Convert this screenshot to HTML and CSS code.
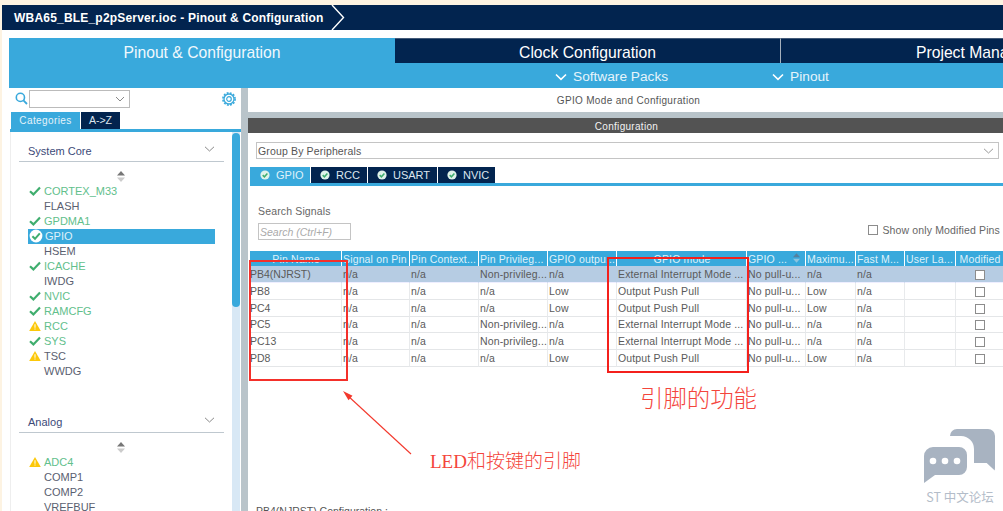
FILE: index.html
```html
<!DOCTYPE html>
<html lang="en">
<head>
<meta charset="utf-8">
<title>Pinout &amp; Configuration</title>
<link rel="stylesheet" href="styles.css">
</head>
<body>
<svg class="defs" width="0" height="0">
  <symbol id="chk" viewBox="0 0 12 10"><path d="M1 5.2 4.4 8.4 11 1.6" fill="none" stroke="#3fae6e" stroke-width="2.2"/></symbol>
  <symbol id="warn" viewBox="0 0 12 10"><path d="M6 0 11.8 10H.2Z" fill="#fcc80a"/><path d="M5.5 3.2h1v3.6h-1zM5.5 7.6h1v1h-1z" fill="#fff"/></symbol>
  <symbol id="tabchk" viewBox="0 0 10 10"><circle cx="5" cy="5" r="4.6" fill="#dff2ea"/><path d="M2.7 5.1 4.4 6.8 7.4 3.4" fill="none" stroke="#3fae6e" stroke-width="1.5"/></symbol>
  <symbol id="sort" viewBox="0 0 8 11"><path d="M4 0 8 4.6H0Z" fill="#777"/><path d="M4 11 8 6.4H0Z" fill="#ccc"/></symbol>
  <symbol id="thsort" viewBox="0 0 8 11"><path d="M4 0 8 4.6H0Z" fill="#55809e"/><path d="M4 11 8 6.4H0Z" fill="#8cc4df"/></symbol>
</svg>

<header class="titlebar">
  <span class="title">WBA65_BLE_p2pServer.ioc - Pinout &amp; Configuration</span>
  <svg class="crumb" width="16" height="25" viewBox="0 0 16 25"><path d="M1 0 12.5 12.5 1 25" fill="none" stroke="#fff" stroke-width="1.4"/></svg>
</header>

<div class="app">
  <nav class="tabs">
    <div class="tab tab-active">Pinout &amp; Configuration</div>
    <div class="tab tab-clock">Clock Configuration</div>
    <div class="tab tab-project">Project Manager</div>
  </nav>
  <div class="subbar">
    <div class="submenu sub-packs"><svg width="12" height="8" viewBox="0 0 12 8"><path d="M1 1.5 6 6.3 11 1.5" fill="none" stroke="#fff" stroke-width="1.6"/></svg>Software Packs</div>
    <div class="submenu sub-pinout"><svg width="12" height="8" viewBox="0 0 12 8"><path d="M1 1.5 6 6.3 11 1.5" fill="none" stroke="#fff" stroke-width="1.6"/></svg>Pinout</div>
  </div>

  <div class="workspace">
    <aside class="sidebar">
      <div class="searchrow">
        <svg class="lens" width="13" height="13" viewBox="0 0 13 13"><circle cx="5.4" cy="5.4" r="4.1" fill="none" stroke="#39a9dc" stroke-width="1.6"/><path d="M8.4 8.4 12 12" stroke="#39a9dc" stroke-width="1.8"/></svg>
        <div class="combo"><svg width="10" height="6" viewBox="0 0 10 6"><path d="M1 1 5 5 9 1" fill="none" stroke="#888" stroke-width="1"/></svg></div>
        <svg class="gear" width="14" height="14" viewBox="0 0 14 14"><circle cx="7" cy="7" r="5" fill="none" stroke="#39a9dc" stroke-width="1.3"/><circle cx="7" cy="7" r="6.1" fill="none" stroke="#39a9dc" stroke-width="1.6" stroke-dasharray="1.9 1.3"/><circle cx="7" cy="7" r="2.3" fill="none" stroke="#39a9dc" stroke-width="1.2"/></svg>
      </div>
      <div class="sidetabs">
        <div class="stab stab-active">Categories</div>
        <div class="stab">A-&gt;Z</div>
      </div>
      <div class="sidepanel">
        <div class="sidelist">
          <div class="group">System Core<svg width="11" height="6" viewBox="0 0 11 6"><path d="M1 .8 5.5 5 10 .8" fill="none" stroke="#888" stroke-width="1"/></svg></div>
          <svg class="sorter" width="8" height="11"><use href="#sort"/></svg>
          <ul class="items">
            <li class="ok"><svg><use href="#chk"/></svg>CORTEX_M33</li>
            <li>FLASH</li>
            <li class="ok"><svg><use href="#chk"/></svg>GPDMA1</li>
            <li class="sel"><svg class="selchk" width="14" height="14" viewBox="0 0 14 14"><circle cx="7" cy="7" r="6.4" fill="#fff"/><path d="M3.4 7.2 6 9.8 10.8 4.4" fill="none" stroke="#3fae6e" stroke-width="2"/></svg>GPIO</li>
            <li>HSEM</li>
            <li class="ok"><svg><use href="#chk"/></svg>ICACHE</li>
            <li>IWDG</li>
            <li class="ok"><svg><use href="#chk"/></svg>NVIC</li>
            <li class="ok"><svg><use href="#chk"/></svg>RAMCFG</li>
            <li class="ok"><svg><use href="#warn"/></svg>RCC</li>
            <li class="ok"><svg><use href="#chk"/></svg>SYS</li>
            <li><svg><use href="#warn"/></svg>TSC</li>
            <li>WWDG</li>
          </ul>
          <div class="group group-analog">Analog<svg width="11" height="6" viewBox="0 0 11 6"><path d="M1 .8 5.5 5 10 .8" fill="none" stroke="#888" stroke-width="1"/></svg></div>
          <svg class="sorter" width="8" height="11"><use href="#sort"/></svg>
          <ul class="items">
            <li class="ok"><svg><use href="#warn"/></svg>ADC4</li>
            <li>COMP1</li>
            <li>COMP2</li>
            <li>VREFBUF</li>
          </ul>
        </div>
        <div class="scrolltrack"><div class="scrollthumb"></div></div>
      </div>
    </aside>

    <main class="main">
      <div class="mainhead">GPIO Mode and Configuration</div>
      <div class="confbar">Configuration</div>
      <div class="groupby">Group By Peripherals<svg width="11" height="6" viewBox="0 0 11 6"><path d="M1 .8 5.5 5 10 .8" fill="none" stroke="#999" stroke-width="1"/></svg></div>
      <div class="ptabs">
        <div class="ptab ptab-active"><svg width="10" height="10"><use href="#tabchk"/></svg>GPIO</div>
        <div class="ptab"><svg width="10" height="10"><use href="#tabchk"/></svg>RCC</div>
        <div class="ptab"><svg width="10" height="10"><use href="#tabchk"/></svg>USART</div>
        <div class="ptab"><svg width="10" height="10"><use href="#tabchk"/></svg>NVIC</div>
      </div>
      <div class="signals">
        <div class="signals-left">
          <div class="signals-label">Search Signals</div>
          <div class="signals-input">Search (Ctrl+F)</div>
        </div>
        <label class="modonly"><span class="box"></span>Show only Modified Pins</label>
      </div>
      <table class="pins">
        <colgroup>
          <col class="c1"><col class="c2"><col class="c3"><col class="c4"><col class="c5"><col class="c6"><col class="c7"><col class="c8"><col class="c9"><col class="c10"><col class="c11">
        </colgroup>
        <thead>
          <tr>
            <th class="center">Pin Name</th><th>Signal on Pin</th><th>Pin Context...</th><th>Pin Privileg...</th><th>GPIO outpu...</th><th class="center">GPIO mode</th><th>GPIO ...<svg class="thsort" width="7" height="10"><use href="#thsort"/></svg></th><th>Maximu...</th><th>Fast M...</th><th>User La...</th><th class="center">Modified</th>
          </tr>
        </thead>
        <tbody>
          <tr class="hl"><td>PB4(NJRST)</td><td>n/a</td><td>n/a</td><td>Non-privileg...</td><td>n/a</td><td>External Interrupt Mode ...</td><td>No pull-u...</td><td>n/a</td><td>n/a</td><td></td><td class="center"><span class="box"></span></td></tr>
          <tr><td>PB8</td><td>n/a</td><td>n/a</td><td>n/a</td><td>Low</td><td>Output Push Pull</td><td>No pull-u...</td><td>Low</td><td>n/a</td><td></td><td class="center"><span class="box"></span></td></tr>
          <tr><td>PC4</td><td>n/a</td><td>n/a</td><td>n/a</td><td>Low</td><td>Output Push Pull</td><td>No pull-u...</td><td>Low</td><td>n/a</td><td></td><td class="center"><span class="box"></span></td></tr>
          <tr class="short"><td>PC5</td><td>n/a</td><td>n/a</td><td>Non-privileg...</td><td>n/a</td><td>External Interrupt Mode ...</td><td>No pull-u...</td><td>n/a</td><td>n/a</td><td></td><td class="center"><span class="box"></span></td></tr>
          <tr><td>PC13</td><td>n/a</td><td>n/a</td><td>Non-privileg...</td><td>n/a</td><td>External Interrupt Mode ...</td><td>No pull-u...</td><td>n/a</td><td>n/a</td><td></td><td class="center"><span class="box"></span></td></tr>
          <tr><td>PD8</td><td>n/a</td><td>n/a</td><td>n/a</td><td>Low</td><td>Output Push Pull</td><td>No pull-u...</td><td>Low</td><td>n/a</td><td></td><td class="center"><span class="box"></span></td></tr>
        </tbody>
      </table>
      <div class="pinconf"><span>PB4(NJRST) Configuration :</span></div>
    </main>
  </div>
</div>

<div class="anno anno-box1"></div>
<div class="anno anno-box2"></div>
<svg class="anno anno-arrow" width="72" height="66" viewBox="0 0 72 66"><path d="M69 63 5 4" stroke="#f3382c" stroke-width="1.1" fill="none"/><path d="M1 0 10.5 4.8 6.5 9.2Z" fill="#f3382c"/></svg>
<div class="anno anno-func">引脚的功能</div>
<div class="anno anno-led">LED和按键的引脚</div>
<div class="anno anno-mark">
  <svg width="72" height="56" viewBox="0 0 72 56"><path d="M26 8a7 7 0 0 1 7-7h31a7 7 0 0 1 7 7v32l-.3 2.500-8-7.500H50V21a13 13 0 0 0-13-13Z" fill="#a8b3c1"/><path d="M0 29a9 9 0 0 1 9-9h26a8 8 0 0 1 8 8v12a8 8 0 0 1-8 8H11l-11 8Z" transform="translate(0 -1)" fill="#a8b3c1"/><circle cx="9" cy="33" r="3.300" fill="#fff"/><circle cx="21" cy="33" r="3.300" fill="#fff"/><circle cx="33" cy="33" r="3.300" fill="#fff"/></svg>
  <span>ST 中文论坛</span>
</div>
</body>
</html>
```
FILE: styles.css
```css
* { box-sizing: border-box; }
html, body { margin: 0; height: 511px; }
body {
  width: 1003px;
  overflow: hidden;
  background: #fdf3e2;
  padding: 5px 0 0 2px;
  font-family: "Liberation Sans", Arial, sans-serif;
  font-size: 11px;
  color: #555;
  position: relative;
}
.defs { position: absolute; }
ul { list-style: none; margin: 0; padding: 0; }

.titlebar {
  height: 25px;
  background: #02244f;
  display: flex;
  align-items: center;
  padding-left: 12px;
  color: #fff;
  font-size: 12px;
  font-weight: bold;
  letter-spacing: .2px;
  white-space: nowrap;
}
.crumb { margin-left: 7px; }

.app {
  width: 1001px;
  height: 481px;
  background: #fff;
  padding: 8px 0 0 7px;
  overflow: hidden;
}
.tabs { display: flex; height: 25px; width: 994px; overflow: hidden; }
.tab {
  flex: none;
  color: #fff;
  font-size: 15.700px;
  line-height: 28px;
  text-align: center;
  background: #02244f;
  border-top: 1px solid #445a78;
}
.tab-active { width: 386px; background: #39a9dc; border-top-color: #39a9dc; color: #f0f8fc; }
.tab-clock { width: 386px; border-right: 1px solid #a6b0bc; }
.tab-project { width: 260px; text-align: left; padding-left: 135px; white-space: nowrap; }

.subbar { height: 25px; background: #39a9dc; display: flex; color: #e6f4fb; font-size: 13.700px; }
.submenu { display: flex; align-items: center; gap: 6px; padding-top: 2px; }
.sub-packs { margin-left: 546px; }
.sub-pinout { margin-left: 104px; }

.workspace { display: grid; grid-template-columns: 232px 1fr; height: 423px; }
.sidebar { display: flex; flex-direction: column; height: 423px; }
.searchrow { height: 24px; display: flex; align-items: flex-start; padding: 2px 0 0 6px; }
.lens { margin-top: 2px; }
.combo {
  width: 101px; height: 18px; margin-left: 1px;
  border: 1px solid #bbb; background: #fff;
  display: flex; align-items: center; justify-content: flex-end; padding-right: 4px;
}
.gear { margin-left: 92px; margin-top: 2px; }
.sidetabs { display: flex; height: 17px; padding-left: 2px; }
.stab { width: 40px; background: #02244f; color: #dce6ee; text-align: center; font-size: 10.500px; line-height: 17px; border-left: 1px solid #fff; }
.stab-active { width: 69px; background: #39a9dc; border-left: 0; font-size: 10px; letter-spacing: .4px; color: #e4f3fa; }
.sidepanel { display: flex; border-top: 3px solid #39a9dc; flex: 1; min-height: 0; margin-left: 1px; }
.sidelist { width: 222px; padding: 11px 0 0 0; border-left: 1px solid #eee; overflow: hidden; }
.group {
  margin-left: 8px; width: 205px; height: 19px;
  padding-left: 9px; border-bottom: 1px solid #bfc8cf;
  color: #3c4a78; font-size: 11px;
  display: flex; justify-content: space-between; align-items: flex-start; line-height: 17px;
}
.group svg { margin: 3px 9px 0 0; }
.group-analog { margin-top: 35px; }
.sorter { display: block; margin: 9px 0 2px 106px; }
.items li { height: 15px; line-height: 15px; padding-left: 16px; position: relative; color: #5a6070; font-size: 11px; width: 187px; margin-left: 17px; }
.items li > svg { position: absolute; left: 1px; top: 2px; width: 12px; height: 10px; }
.items li.ok { color: #62c08c; }
.items li.sel { background: #39a9dc; color: #dff1fa; padding-left: 17px; }
.items li.sel > svg.selchk { left: 1px; top: 0; width: 14px; height: 14px; }
.scrolltrack { width: 8px; background: #d8e8f5; padding-top: 1px; }
.scrollthumb { height: 174px; background: #39a9dc; border-radius: 4px; }

.main { background: #fff; border-left: 7px solid #b9c4ca; position: relative; overflow: hidden; height: 423px; }
.mainhead { height: 24px; line-height: 26px; text-align: center; font-size: 10px; letter-spacing: .33px; color: #555; padding-left: 6px; }
.confbar { height: 21px; background: #535353; border-top: 6px solid #b9c4ca; color: #f2f2f2; text-align: center; font-size: 10px; line-height: 17px; letter-spacing: .3px; padding-left: 2px; }
.groupby {
  margin: 9px 4px 0 8px; height: 17px; border: 1px solid #c4c4c4;
  font-size: 10.500px; padding: 1px 0 0 1px; color: #555; letter-spacing: .15px;
  display: flex; justify-content: space-between; align-items: center;
}
.groupby svg { margin-right: 4px; }
.ptabs { display: flex; margin: 8px 0 0 2px; border-bottom: 3px solid #39a9dc; height: 19px; }
.ptab { width: 57px; height: 16px; background: #02244f; color: #dce6ee; font-size: 11px; display: flex; align-items: center; gap: 6px; padding-left: 9px; border-right: 1px solid #fff; }
.ptab-active { width: 61px; background: #39a9dc; color: #dff1fa; padding-left: 10px; }
.ptab:nth-child(3) { width: 70px; }
.ptab:nth-child(4) { width: 58px; }
.signals { display: flex; justify-content: space-between; height: 65px; padding: 18px 3px 0 10px; }
.signals-label { font-size: 10.500px; line-height: 14px; color: #666; letter-spacing: .15px; }
.signals-input { margin-top: 5px; width: 93px; height: 17px; border: 1px solid #c4c4c4; font-style: italic; color: #aaa; font-size: 10.500px; line-height: 17px; padding-left: 1px; }
.modonly { display: flex; align-items: center; gap: 4px; height: 14px; margin-top: 19px; font-size: 10.500px; color: #666; letter-spacing: .14px; }
.box { display: inline-block; width: 10px; height: 10px; border: 1px solid #8c8c8c; background: #fff; vertical-align: middle; }

.pins { border-collapse: separate; border-spacing: 0; table-layout: fixed; width: 754px; margin-left: 2px; }
.c1 { width: 92px; } .c2 { width: 68px; } .c3 { width: 69px; } .c4 { width: 69px; } .c5 { width: 69px; }
.c6 { width: 130px; } .c7 { width: 59px; } .c8 { width: 50px; } .c9 { width: 49px; } .c10 { width: 51px; } .c11 { width: 48px; }
.pins th {
  height: 15px; padding: 0 0 0 1px; background: #39a9dc; color: #dff1fa;
  font-weight: normal; font-size: 10.500px; line-height: 14px; text-align: left; white-space: nowrap; overflow: hidden;
  border-right: 1px solid #fff; position: relative; letter-spacing: .15px;
}
.thsort { position: absolute; right: 5px; top: 2px; }
.pins .center { text-align: center; }
.pins td {
  height: 17px; padding: 0 0 1px 1px; border-bottom: 1px solid #e4e6e8; border-right: 1px solid #e8eaec;
  font-size: 10.500px; line-height: 14px; white-space: nowrap; overflow: hidden; color: #5a5a5a; letter-spacing: .15px;
}
.pins td:first-child { padding-left: 0; letter-spacing: 0; }
.pins .short td { height: 16px; }
.pins .hl td { background: #b6cce3; border-color: #b6cce3; border-bottom-color: #eef; }
.pinconf { margin-top: 138px; margin-left: 8px; display: flex; font-size: 10.500px; color: #555; height: 13px; line-height: 13px; white-space: nowrap; }
.pinconf span { flex: none; padding-right: 2px; }
.pinconf::after { content: ""; flex: 1; height: 6px; border-bottom: 1px solid #ddd; }

.anno { position: absolute; }
.anno-box1 { left: 249px; top: 260px; width: 99px; height: 121px; border: 2px solid #f4302a; }
.anno-box2 { left: 607px; top: 257px; width: 142px; height: 116px; border: 2px solid #f4201c; }
.anno-arrow { left: 342px; top: 391px; }
.anno-func { left: 640px; top: 382px; font-family: "Noto Sans CJK SC", sans-serif; font-weight: 300; font-size: 23.400px; line-height: 30px; color: #f4453c; white-space: nowrap; }
.anno-led { left: 430px; top: 449px; font-family: "Liberation Serif", "Noto Sans CJK SC", serif; font-weight: 300; font-size: 19px; line-height: 26px; color: #f4453c; white-space: nowrap; }
.anno-mark { left: 924px; top: 428px; width: 72px; display: flex; flex-direction: column; align-items: center; gap: 5px; color: #b4bdc9; font-family: "Noto Sans CJK SC", sans-serif; font-size: 12.500px; line-height: 16px; white-space: nowrap; }
```
